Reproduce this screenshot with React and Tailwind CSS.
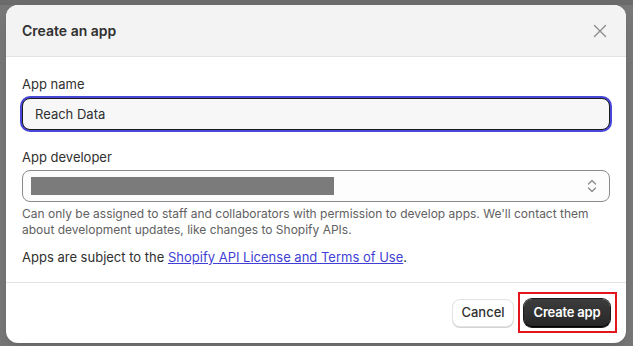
import { useState } from "react";

function CloseIcon() {
  return (
    <svg width="16" height="16" viewBox="0 0 16 16" fill="none">
      <path d="M2.5 2.5l11 11M13.5 2.5l-11 11" stroke="#8a8a8a" strokeWidth="1.3" strokeLinecap="round" />
    </svg>
  );
}

function SelectChevrons() {
  return (
    <svg width="14" height="20" viewBox="0 0 14 20" fill="none">
      <path d="M3.5 8l3.5-3.5L10.5 8" stroke="#8a8a8a" strokeWidth="1.3" strokeLinecap="round" strokeLinejoin="round" />
      <path d="M3.5 12l3.5 3.5L10.5 12" stroke="#8a8a8a" strokeWidth="1.3" strokeLinecap="round" strokeLinejoin="round" />
    </svg>
  );
}

function FieldLabel({ children }) {
  return <label className="block text-[13px] leading-5 text-[#303030]">{children}</label>;
}

export default function App() {
  const [appName, setAppName] = useState("Reach Data");

  return (
    <div
      className="relative h-[346px] w-[633px] overflow-hidden bg-[#777777]"
      style={{ fontFamily: "Inter, 'Noto Sans', 'Liberation Sans', sans-serif" }}
    >
      {/* dimmed page behind the modal */}
      <div className="flex h-full flex-col">
        <div className="h-[5px] bg-[#6b6b6b]" />
      </div>

      {/* modal */}
      <div className="absolute left-[6px] top-[5px] flex h-[338px] w-[620px] flex-col overflow-hidden rounded-xl bg-white shadow-lg">
        {/* header */}
        <div className="flex h-[52px] shrink-0 items-center justify-between border-b border-[#e3e3e3] bg-[#f3f3f3] pl-4 pr-[18px]">
          <h2 className="text-[14px] font-semibold text-[#303030]">Create an app</h2>
          <button type="button" className="flex items-center justify-center">
            <CloseIcon />
          </button>
        </div>

        {/* body */}
        <div className="flex flex-1 flex-col border-b border-[#e3e3e3] px-4 pt-[17px]">
          <FieldLabel>App name</FieldLabel>
          <input
            value={appName}
            onChange={(e) => setAppName(e.target.value)}
            className="mt-1 h-8 w-full rounded-lg border border-[#1a1a1a] bg-[#f7f7f7] px-3 text-[13px] text-[#303030] outline-none ring-2 ring-[#4848d8]"
          />

          <div className="mt-[17px]">
            <FieldLabel>App developer</FieldLabel>
          </div>
          <div className="mt-[3px] flex h-8 w-full items-center justify-between rounded-lg border border-[#8a8a8a] bg-[#fdfdfd] pl-2 pr-[10px]">
            <div className="h-[18px] w-[303px] bg-[#7b7b7b]" />
            <SelectChevrons />
          </div>
          <p className="mt-1 text-[12px] leading-4 text-[#616161]">
            <span className="block whitespace-nowrap">
              Can only be assigned to staff and collaborators with permission to develop apps. We'll contact them
            </span>
            <span className="block">about development updates, like changes to Shopify APIs.</span>
          </p>

          <p className="mt-[9px] text-[13px] leading-5 text-[#303030]">
            Apps are subject to the{" "}
            <a href="#" className="text-[#3f3fd4] underline">
              Shopify API License and Terms of Use
            </a>
            .
          </p>
        </div>

        {/* footer */}
        <div className="flex h-[60px] shrink-0 items-center justify-end gap-[10px] px-4">
          <button
            type="button"
            className="h-7 w-[62px] rounded-lg border border-[#e3e3e3] bg-white text-[13px] font-medium text-[#303030] shadow-[0_1px_0_#d4d4d4]"
          >
            Cancel
          </button>
          <div className="relative">
            <button
              type="button"
              className="h-7 w-[86px] rounded-lg bg-gradient-to-b from-[#3d3d3d] to-[#262626] text-[13px] font-semibold tracking-[-0.2px] text-white shadow-[inset_0_-1px_0_#000,0_0_0_1px_#1a1a1a]"
            >
              Create app
            </button>
            <div className="pointer-events-none absolute -bottom-[6px] -left-[6px] -right-[7px] -top-[7px] border-2 border-[#e3161b]" />
          </div>
        </div>
      </div>
    </div>
  );
}
